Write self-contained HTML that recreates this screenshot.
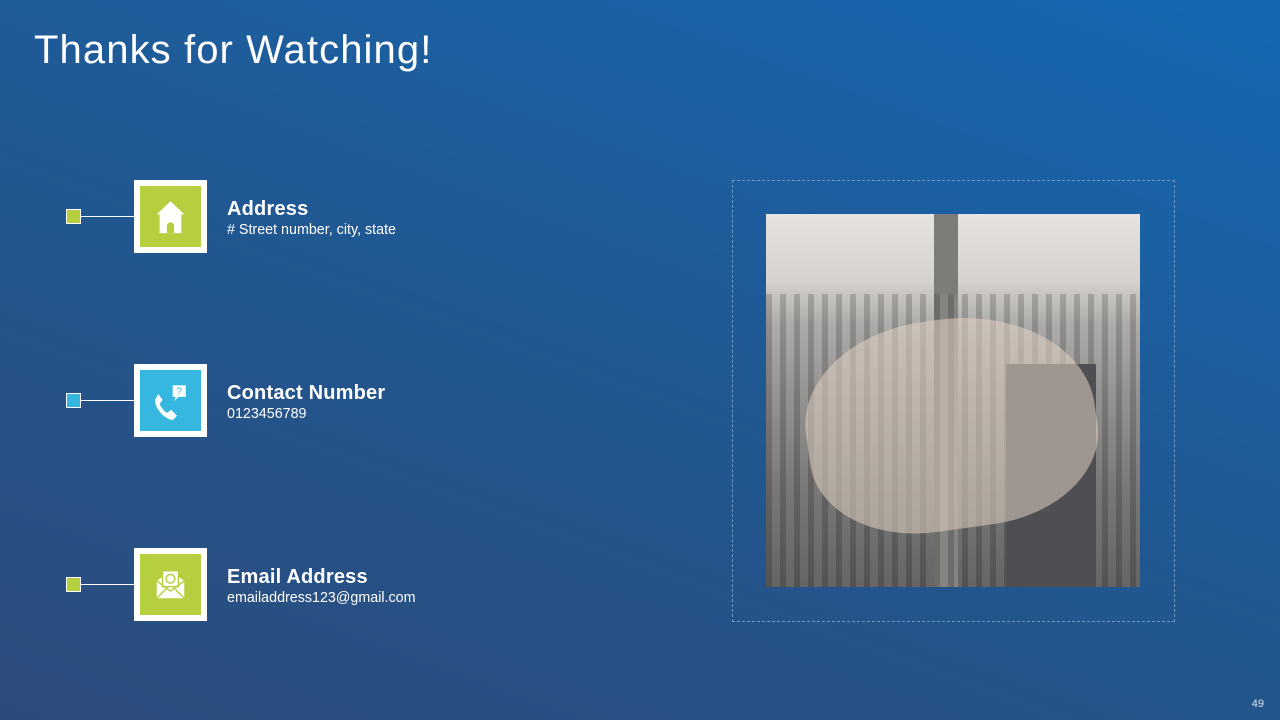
<!DOCTYPE html>
<html><head><meta charset="utf-8"><style>
*{margin:0;padding:0;box-sizing:border-box}
body{width:1280px;height:720px;overflow:hidden;position:relative;font-family:"Liberation Sans",sans-serif;
background:linear-gradient(20deg,#2c4b7b 0%,#22568f 45%,#1b60a2 75%,#1567b2 100%);color:#fff}
h1{position:absolute;left:34px;top:28px;font-weight:normal;font-size:40px;letter-spacing:1.1px;color:#fff}
.sq{position:absolute;width:15px;height:15px;border:1px solid #fff}
.ln{position:absolute;height:1px;background:#fff;width:53px;left:81px}
.box{position:absolute;left:134px;width:73px;height:73px;border:6px solid #fff}
.box svg g{transform:translate(30.5px,30.5px) scale(1.45) translate(-30.5px,-30.5px)}
.t{position:absolute;left:227px;font-weight:bold;font-size:20px;letter-spacing:0.2px}
.s{position:absolute;left:227px;font-size:14.3px}
.dash{position:absolute;left:732px;top:180px;width:443px;height:442px;border:1px dashed #6f97c4}
.photo{position:absolute;left:766px;top:214px;width:374px;height:373px;overflow:hidden;
background:linear-gradient(180deg,#e6e3e0 0%,#d6d2cd 18%,#a9a7a4 30%,#8d8b89 50%,#6f6e6d 75%,#5a5a5b 100%)}
.pg{position:absolute;right:16px;top:698px;font-size:11px;color:#dfe6f0}
</style></head><body>
<h1>Thanks for Watching!</h1>

<div class="sq" style="left:66px;top:209px;background:#b5cf3e"></div>
<div class="ln" style="top:216px"></div>
<div class="box" style="top:180px;background:#b5cf3e">
<svg width="61" height="61" viewBox="0 0 61 61"><g><path d="M21 29 L30.5 20 L40 29 Z" fill="#fff"/><rect x="23" y="29" width="15" height="13" fill="#fff"/><path d="M28 42 v-5 a2.5 2.5 0 0 1 5 0 v5" fill="#b5cf3e"/></g></svg></div>
<div class="t" style="top:198px">Address</div>
<div class="s" style="top:222px"># Street number, city, state</div>

<div class="sq" style="left:66px;top:393px;background:#35b7e0"></div>
<div class="ln" style="top:400px"></div>
<div class="box" style="top:364px;background:#35b7e0">
<svg width="61" height="61" viewBox="0 0 61 61"><g><path d="M20 30 c-1 4 5 13 12 14 l3-3 -4-4 -3 2 c-2-1-4-4-5-6 l2-3 -3-4 z" fill="#fff"/><rect x="32" y="20" width="9" height="8" fill="#fff"/><path d="M34 28 l-1 3 3-3z" fill="#fff"/><text x="36.5" y="26.5" font-size="7" fill="#35b7e0" text-anchor="middle" font-family="Liberation Sans">?</text></g></svg></div>
<div class="t" style="top:382px">Contact Number</div>
<div class="s" style="top:406px">0123456789</div>

<div class="sq" style="left:66px;top:577px;background:#b5cf3e"></div>
<div class="ln" style="top:584px"></div>
<div class="box" style="top:548px;background:#b5cf3e">
<svg width="61" height="61" viewBox="0 0 61 61"><g><path d="M21 28 L30.5 21 L40 28 V40 H21 Z" fill="#fff"/><rect x="25" y="21" width="11" height="11" fill="#fff" stroke="#b5cf3e"/><circle cx="30.5" cy="26.5" r="3" fill="none" stroke="#b5cf3e"/><path d="M21 28 L30.5 35 L40 28 M21 40 L28 33 M40 40 L33 33" stroke="#b5cf3e" fill="none"/></g></svg></div>
<div class="t" style="top:566px">Email Address</div>
<div class="s" style="top:590px">emailaddress123@gmail.com</div>

<div class="dash"></div>
<div class="photo">
<div style="position:absolute;left:168px;top:0;width:24px;height:373px;background:#7e7c79"></div>
<div style="position:absolute;left:0;top:80px;width:374px;height:293px;background:repeating-linear-gradient(90deg,rgba(60,60,60,.25) 0 6px,rgba(200,200,200,.1) 6px 14px)"></div>
<div style="position:absolute;left:240px;top:150px;width:90px;height:223px;background:#4e4f52"></div>
<div style="position:absolute;left:40px;top:105px;width:290px;height:210px;border-radius:45% 50% 40% 40%;background:rgba(225,210,195,.55);transform:rotate(-8deg)"></div>
</div>
<div class="pg">49</div>
</body></html>
